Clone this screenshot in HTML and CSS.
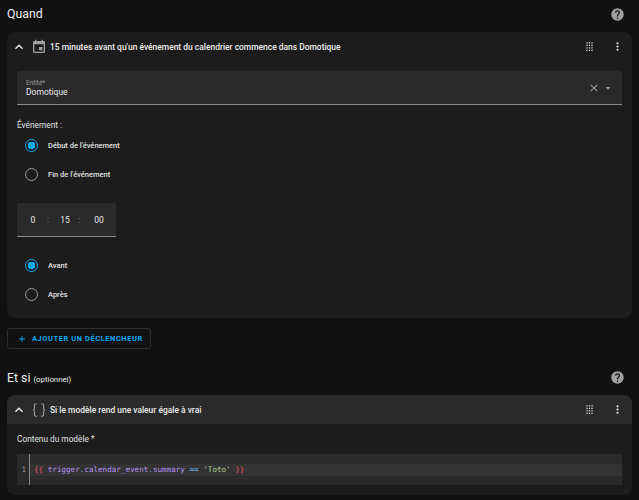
FILE: index.html
```html
<!DOCTYPE html>
<html lang="fr">
<head>
<meta charset="utf-8">
<title>Automatisation</title>
<link rel="stylesheet" href="styles.css">
</head>
<body>
<main class="page">
  <section class="section-head first">
    <h2 class="title">Quand</h2>
    <svg class="help" viewBox="0 0 24 24"><path d="M15.07 11.25l-.9.92C13.45 12.89 13 13.5 13 15h-2v-.5c0-1.11.45-2.11 1.17-2.83l1.24-1.26c.37-.36.59-.86.59-1.41a2 2 0 0 0-2-2 2 2 0 0 0-2 2H8a4 4 0 0 1 4-4 4 4 0 0 1 4 4c0 .88-.36 1.67-.93 2.25zM13 19h-2v-2h2zM12 2A10 10 0 0 0 2 12a10 10 0 0 0 10 10 10 10 0 0 0 10-10c0-5.53-4.5-10-10-10z"/></svg>
  </section>

  <article class="card">
    <header class="card-head">
      <svg class="chev" viewBox="0 0 24 24"><path d="M7.41 15.41 12 10.83l4.59 4.58L18 14l-6-6-6 6z"/></svg>
      <svg class="type-icon" viewBox="0 0 24 24"><path d="M19 19H5V8h14m-3-7v2H8V1H6v2H5c-1.11 0-2 .89-2 2v14a2 2 0 0 0 2 2h14a2 2 0 0 0 2-2V5a2 2 0 0 0-2-2h-1V1m-1 11h-5v5h5z"/></svg>
      <span class="card-title">15 minutes avant qu'un événement du calendrier commence dans Domotique</span>
      <svg class="drag" viewBox="0 0 24 24"><path d="M7 19v-2h2v2H7m4 0v-2h2v2h-2m4 0v-2h2v2h-2m-8-4v-2h2v2H7m4 0v-2h2v2h-2m4 0v-2h2v2h-2m-8-4V9h2v2H7m4 0V9h2v2h-2m4 0V9h2v2h-2M7 7V5h2v2H7m4 0V5h2v2h-2m4 0V5h2v2h-2z"/></svg>
      <svg class="more" viewBox="0 0 24 24"><path d="M12 16a2 2 0 0 1 2 2 2 2 0 0 1-2 2 2 2 0 0 1-2-2 2 2 0 0 1 2-2m0-6a2 2 0 0 1 2 2 2 2 0 0 1-2 2 2 2 0 0 1-2-2 2 2 0 0 1 2-2m0-6a2 2 0 0 1 2 2 2 2 0 0 1-2 2 2 2 0 0 1-2-2 2 2 0 0 1 2-2z"/></svg>
    </header>
    <div class="card-body">
      <div class="field">
        <div class="field-text">
          <span class="field-label">Entité*</span>
          <span class="field-value">Domotique</span>
        </div>
        <svg class="clear" viewBox="0 0 24 24"><path d="M19 6.41 17.59 5 12 10.59 6.41 5 5 6.41 10.59 12 5 17.59 6.41 19 12 13.41 17.59 19 19 17.59 13.41 12z"/></svg>
        <svg class="caret" viewBox="0 0 24 24"><path d="M7 10l5 5 5-5z"/></svg>
      </div>
      <p class="group-label">Événement :</p>
      <div class="radio-row"><span class="radio on"></span><span class="radio-text">Début de l'événement</span></div>
      <div class="radio-row"><span class="radio"></span><span class="radio-text">Fin de l'événement</span></div>
      <div class="time">
        <span class="time-cell">0</span><span class="time-sep">:</span>
        <span class="time-cell mid">15</span><span class="time-sep">:</span>
        <span class="time-cell">00</span>
      </div>
      <div class="radio-row"><span class="radio on"></span><span class="radio-text">Avant</span></div>
      <div class="radio-row"><span class="radio"></span><span class="radio-text">Après</span></div>
    </div>
  </article>

  <button class="add" type="button">
    <svg class="plus" viewBox="0 0 24 24"><path d="M19 13h-6v6h-2v-6H5v-2h6V5h2v6h6z"/></svg>
    <span>Ajouter un déclencheur</span>
  </button>

  <section class="section-head second">
    <h2 class="title">Et si <small class="opt">(optionnel)</small></h2>
    <svg class="help" viewBox="0 0 24 24"><path d="M15.07 11.25l-.9.92C13.45 12.89 13 13.5 13 15h-2v-.5c0-1.11.45-2.11 1.17-2.83l1.24-1.26c.37-.36.59-.86.59-1.41a2 2 0 0 0-2-2 2 2 0 0 0-2 2H8a4 4 0 0 1 4-4 4 4 0 0 1 4 4c0 .88-.36 1.67-.93 2.25zM13 19h-2v-2h2zM12 2A10 10 0 0 0 2 12a10 10 0 0 0 10 10 10 10 0 0 0 10-10c0-5.53-4.5-10-10-10z"/></svg>
  </section>

  <article class="card">
    <header class="card-head shaded">
      <svg class="chev" viewBox="0 0 24 24"><path d="M7.41 15.41 12 10.83l4.59 4.58L18 14l-6-6-6 6z"/></svg>
      <svg class="type-icon braces" viewBox="0 0 16 18"><path d="M5.8 2.7H5C3.9 2.7 3.4 3.3 3.4 4.4v3C3.4 8.3 2.9 9 1.9 9c1 0 1.5.7 1.5 1.6v3c0 1.1.5 1.7 1.6 1.7h.8M10.2 2.7h.8c1.1 0 1.6.6 1.6 1.7v3c0 .9.5 1.6 1.5 1.6-1 0-1.5.7-1.5 1.6v3c0 1.1-.5 1.7-1.6 1.7h-.8"/></svg>
      <span class="card-title">Si le modèle rend une valeur égale à vrai</span>
      <svg class="drag" viewBox="0 0 24 24"><path d="M7 19v-2h2v2H7m4 0v-2h2v2h-2m4 0v-2h2v2h-2m-8-4v-2h2v2H7m4 0v-2h2v2h-2m4 0v-2h2v2h-2m-8-4V9h2v2H7m4 0V9h2v2h-2m4 0V9h2v2h-2M7 7V5h2v2H7m4 0V5h2v2h-2m4 0V5h2v2h-2z"/></svg>
      <svg class="more" viewBox="0 0 24 24"><path d="M12 16a2 2 0 0 1 2 2 2 2 0 0 1-2 2 2 2 0 0 1-2-2 2 2 0 0 1 2-2m0-6a2 2 0 0 1 2 2 2 2 0 0 1-2 2 2 2 0 0 1-2-2 2 2 0 0 1 2-2m0-6a2 2 0 0 1 2 2 2 2 0 0 1-2 2 2 2 0 0 1-2-2 2 2 0 0 1 2-2z"/></svg>
    </header>
    <div class="card-body tight">
      <p class="code-label">Contenu du modèle *</p>
      <div class="code">
        <div class="gutter">1</div>
        <div class="lines"><div class="active"><span class="t-br">{{</span> <span class="t-var">trigger</span><span class="t-op">.</span><span class="t-var">calendar_event</span><span class="t-op">.</span><span class="t-var">summary</span> <span class="t-op">==</span> <span class="t-str">'Toto'</span> <span class="t-br">}}</span></div></div>
      </div>
    </div>
  </article>
</main>
</body>
</html>
```

FILE: styles.css
```css
* { box-sizing: border-box; }
html, body { margin: 0; height: 100%; overflow: hidden; }
body { background: #111; color: #e1e1e1; font-family: Roboto, "Liberation Sans", sans-serif; }
.page { padding: 0 7px; }
.section-head { display: flex; align-items: center; justify-content: space-between; height: 28px; }
.section-head.first { margin-bottom: 4px; }
.section-head.second { margin-top: 13px; margin-bottom: 3px; height: 30px; }
.second .title { margin-top: 2px; }
.title { margin: 0; font-size: 12.3px; font-weight: 400; color: #eee; }
.opt { font-size: 7.8px; }
.help { width: 15px; height: 15px; fill: #a0a0a0; margin-right: 7px; }
.card { background: #1c1c1c; border-radius: 8px; overflow: hidden; }
.card-head { display: flex; align-items: center; height: 29px; padding: 0 0 0 4px; }
.card-head.shaded { background: #2a2a2a; }
.chev { width: 16px; height: 16px; fill: #eee; flex: none; }
.type-icon { width: 16px; height: 16px; fill: #a0a0a0; flex: none; margin-left: 4px; }
.type-icon.braces { height: 18px; fill: none; stroke: #a0a0a0; stroke-width: 1.1; }
.card-title { flex: 1; margin-left: 3px; font-size: 8.45px; font-weight: 500; color: #ececec; white-space: nowrap; }
.drag { width: 15px; height: 15px; fill: #e1e1e1; flex: none; margin-right: 14px; }
.more { width: 13px; height: 13px; fill: #e8e8e8; flex: none; margin-right: 8px; }
.card-body { padding: 10px 10px 0; height: 257px; }
.card-body.tight { padding-top: 10px; height: 71px; }
.field { display: flex; align-items: center; height: 34px; background: #2a2a2a; border-bottom: 1px solid #8a8a8a; border-radius: 3px 3px 0 0; padding: 0 8px 0 9px; }
.field-text { flex: 1; display: flex; flex-direction: column; gap: 0; }
.field-label { font-size: 6.4px; color: #9a9a9a; }
.field-value { font-size: 8.5px; color: #e8e8e8; }
.clear { width: 12px; height: 12px; fill: #9a9a9a; margin-right: 2px; }
.caret { width: 12px; height: 12px; fill: #a5a5a5; }
.group-label { margin: 15px 0 0; font-size: 8.3px; line-height: 11px; color: #e1e1e1; }
.radio-row { display: flex; align-items: center; height: 29px; padding-left: 8px; }
.radio { width: 13px; height: 13px; border-radius: 50%; border: 1.5px solid #9a9a9a; flex: none; }
.radio.on { border-color: #03a9f4; background: radial-gradient(circle, #03a9f4 0 3.6px, transparent 4px); }
.radio-text { margin-left: 10px; font-size: 7.5px; font-weight: 500; color: #e1e1e1; }
.time { display: grid; grid-template-columns: 24px 6px 25px 6px 34px; align-items: center; width: 99px; height: 34px; margin: 14px 0; padding-left: 4px; background: #2a2a2a; border-bottom: 1px solid #8a8a8a; font-size: 8.5px; color: #e8e8e8; border-radius: 3px 3px 0 0; }
.time-cell { text-align: center; }
.time-cell.mid { padding-left: 3px; }
.time-sep { color: #8a8a8a; text-align: center; }
.add { display: flex; align-items: center; width: 144px; height: 21px; margin-top: 10px; padding: 0 0 0 9px; background: transparent; border: 1px solid #2c2c2c; border-radius: 3px; color: #03a9f4; font: 700 7.5px Roboto, "Liberation Sans", sans-serif; letter-spacing: .55px; text-transform: uppercase; white-space: nowrap; }
.plus { width: 10px; height: 10px; fill: #03a9f4; margin-right: 5px; flex: none; }
.code-label { margin: 0 0 9px; font-size: 8.3px; line-height: 11px; color: #e1e1e1; }
.code { display: flex; height: 31px; background: #2a2a2a; font: 7.6px/12px "DejaVu Sans Mono", monospace; }
.gutter { width: 13px; flex: none; border-right: 1px solid #8a8a8a; color: #8f8f8f; text-align: right; padding: 10px 3px 0 0; font-size: 7.6px; }
.lines { flex: 1; padding-top: 10px; }
.active { background: #333; height: 12px; padding-left: 4px; white-space: pre; color: #ddd; }
.t-br { color: #f0525a; }
.t-var { color: #b794f6; }
.t-op { color: #64b5f6; }
.t-str { color: #b5d68f; }
```
